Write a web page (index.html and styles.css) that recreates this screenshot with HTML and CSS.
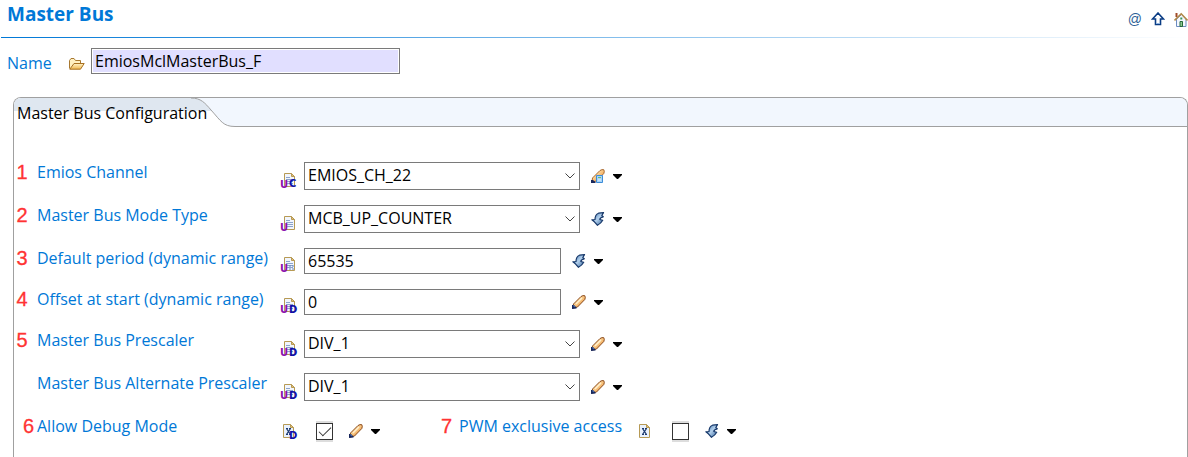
FILE: index.html
```html
<!DOCTYPE html>
<html lang="en">
<head>
  <meta charset="UTF-8">
  <meta name="viewport" content="width=device-width, initial-scale=1.0">
  <title>Master Bus</title>
  <link rel="stylesheet" href="styles.css">
</head>
<body>

  <!-- shared icons -->
  <svg class="sprite" aria-hidden="true">
    <linearGradient id="wood" x1="0" y1="0" x2="1" y2="1">
      <stop offset="0.3" stop-color="#ffe0a8"/>
      <stop offset="0.7" stop-color="#f0a858"/>
    </linearGradient>
    <linearGradient id="steel" x1="0" y1="0" x2="1" y2="1">
      <stop offset="0" stop-color="#2f68a4"/>
      <stop offset="0.5" stop-color="#b3d0ec"/>
      <stop offset="1" stop-color="#2c5e98"/>
    </linearGradient>
    <linearGradient id="gold" x1="0" y1="0" x2="0" y2="1">
      <stop offset="0" stop-color="#fff3c8"/>
      <stop offset="1" stop-color="#f0b850"/>
    </linearGradient>
    <linearGradient id="tab-fill" x1="0" y1="0" x2="0" y2="1">
      <stop offset="0.45" stop-color="#dfe7f0"/>
      <stop offset="0.45" stop-color="#ffffff"/>
    </linearGradient>
    <symbol id="page" viewBox="0 0 15 15">
      <path d="M3.500 .5h7l3 3v10h-10z" fill="#f1f5fd" stroke="#b79a54"/>
      <path d="M10.500 .5v3h3z" fill="#e4c07a" stroke="#b79a54"/>
      <path d="M5 4.500h4M5 6.500h7M5 8.500h7M5 10.500h7" stroke="#8ba3cc"/>
    </symbol>
    <symbol id="page-x" viewBox="0 0 15 15">
      <path d="M2.500 .5h7l3 3v10h-10z" fill="#e9f1fd" stroke="#b79a54"/>
      <path d="M9.500 .5v3h3z" fill="#e4c07a" stroke="#b79a54"/>
      <path d="M5 4.500h2M8 4.500h2M5 10.500h2M8 10.500h2" stroke="#1d3b70"/>
      <path d="M5.500 4.500l4 6M9.500 4.500l-4 6" stroke="#1d3b70" stroke-width="1.300"/>
    </symbol>
    <symbol id="pencil" viewBox="0 0 14 14">
      <path d="M1.500 9L9 1.500Q11 .2 12.800 .7Q13.800 2.500 12.800 4.500L5.500 12L1 13z" fill="url(#wood)" stroke="#8a4a1c"/>
      <path d="M4 9l6-6" stroke="#fff0cc" stroke-width="1.500"/>
      <path d="M0 14v-4h2l2.500 2.500v1z" fill="#18275c"/>
      <path d="M1 10.500l2 1.500" stroke="#4c78bc"/>
    </symbol>
    <symbol id="pencil-calc" viewBox="0 0 14 14">
      <path d="M1.500 9L9 1.500Q11 .2 12.800 .7Q13.800 2.500 12.800 4.500L5.500 12L1 13z" fill="url(#wood)" stroke="#a86830"/>
      <path d="M0 14v-3h2l2.500 2v1z" fill="#18275c"/>
      <path d="M5.500 6.500h6v7h-6z" fill="#a8d4f8" stroke="#3c8cd8"/>
      <path d="M7 8.500h3" stroke="#6cc26c"/>
      <path d="M7 11h3" stroke="#e4f4ff"/>
    </symbol>
    <symbol id="derive" viewBox="0 0 14 14">
      <path d="M12.500 .6L7.500 1.200Q4 2.500 4 7.500L.8 7.800Q3 9 6.500 13.300Q10 11.500 11.700 8.300L8.800 7.500Q9 5.500 12.300 4.800L10.800 3.500z" fill="url(#steel)" stroke="#17386a" stroke-width="1.200" stroke-linejoin="round"/>
    </symbol>
    <symbol id="caret" viewBox="0 0 9 5">
      <path d="M0 0h9v1L5 5H4L0 1z" fill="#000"/>
    </symbol>
    <symbol id="chevron" viewBox="0 0 10 6">
      <path d="M.5 .5L5 5L9.500 .5" fill="none" stroke="#444"/>
    </symbol>
  </svg>

  <header class="header">
    <h1>Master Bus</h1>
    <nav class="tools">
      <a href="#" class="at">@</a>
      <a href="#" aria-label="Up">
        <svg width="14" height="14" viewBox="0 0 14 14"><path d="M7 1L1.500 7H4.500v5.500h5V7h3z" fill="#fff" stroke="#0a3c84" stroke-width="1.600"/><path d="M5 11.500h4" stroke="#8fb4e0"/></svg>
      </a>
      <a href="#" aria-label="Home">
        <svg width="14" height="15" viewBox="0 0 14 15">
          <path d="M2.500 7v7.500h9.500V7L7.500 2.500z" fill="#f3f7ff" stroke="#6c8cc0"/>
          <path d="M2.500 1v4" stroke="#a04a28" stroke-width="2"/>
          <path d="M.5 8.500L7.200 1.800L13.500 8.500" fill="none" stroke="#b08848" stroke-width="1.600"/>
          <path d="M6 9.500h2.500v5H6z" fill="#8cc890" stroke="#246838"/>
          <path d="M6.300 6.500h2" stroke="#38945c" stroke-width="2"/>
        </svg>
      </a>
    </nav>
  </header>

  <div class="name-row">
    <label for="name">Name</label>
    <svg width="16" height="12" viewBox="0 0 16 12">
      <path d="M.5 10.500v-8l1.500-2h3l1.500 2h5v2.500" fill="#fff0c0" stroke="#a87830"/>
      <path d="M.8 11.200L5 5.500h10.200L11.500 11.200z" fill="url(#gold)" stroke="#a87020"/>
    </svg>
    <input type="text" id="name" value="EmiosMclMasterBus_F">
  </div>

  <main class="panel">
    <div class="tab-bar">
      <button class="tab" type="button">Master Bus Configuration</button>
      <svg class="tab-curve" width="44" height="29" viewBox="0 0 44 29">
        <path d="M0 0C10 0 14 5 20 12C30 23 32 28.500 44 28.500V29H0z" fill="url(#tab-fill)"/>
        <path d="M0 0C10 0 14 5 20 12C30 23 32 28.500 44 28.500" fill="none" stroke="#a0a0a0"/>
      </svg>
      <div class="tab-rest"></div>
    </div>

    <form class="fields">
      <div class="field">
        <span class="num">1</span>
        <label for="channel">Emios Channel</label>
        <svg class="state" viewBox="0 0 15 15"><use href="#page"/><text class="u" x="-1" y="15">U</text><text class="d" x="8" y="14">C</text></svg>
        <div class="combo">
          <select id="channel"><option>EMIOS_CH_22</option></select>
          <svg><use href="#chevron"/></svg>
        </div>
        <button class="action" type="button" aria-label="Edit"><svg class="tool"><use href="#pencil-calc"/></svg><svg class="caret"><use href="#caret"/></svg></button>
      </div>

      <div class="field">
        <span class="num">2</span>
        <label for="mode">Master Bus Mode Type</label>
        <svg class="state" viewBox="0 0 15 15"><use href="#page"/><text class="u" x="-1" y="15">U</text></svg>
        <div class="combo">
          <select id="mode"><option>MCB_UP_COUNTER</option></select>
          <svg><use href="#chevron"/></svg>
        </div>
        <button class="action" type="button" aria-label="Derive"><svg class="tool"><use href="#derive"/></svg><svg class="caret"><use href="#caret"/></svg></button>
      </div>

      <div class="field">
        <span class="num">3</span>
        <label for="period">Default period (dynamic range)</label>
        <svg class="state" viewBox="0 0 15 15"><use href="#page"/><path d="M8 9h2M11 9h2M8 12h2M11 12h2" stroke="#6484b8"/><text class="u" x="-1" y="15">U</text></svg>
        <input type="text" id="period" value="65535">
        <button class="action" type="button" aria-label="Derive"><svg class="tool"><use href="#derive"/></svg><svg class="caret"><use href="#caret"/></svg></button>
      </div>

      <div class="field">
        <span class="num">4</span>
        <label for="offset">Offset at start (dynamic range)</label>
        <svg class="state" viewBox="0 0 15 15"><use href="#page"/><text class="u" x="-1" y="15">U</text><text class="d" x="8" y="15">D</text></svg>
        <input type="text" id="offset" value="0">
        <button class="action" type="button" aria-label="Edit"><svg class="tool"><use href="#pencil"/></svg><svg class="caret"><use href="#caret"/></svg></button>
      </div>

      <div class="field">
        <span class="num">5</span>
        <label for="prescaler">Master Bus Prescaler</label>
        <svg class="state" viewBox="0 0 15 15"><use href="#page"/><text class="u" x="-1" y="15">U</text><text class="d" x="8" y="15">D</text></svg>
        <div class="combo">
          <select id="prescaler"><option>DIV_1</option></select>
          <svg><use href="#chevron"/></svg>
        </div>
        <button class="action" type="button" aria-label="Edit"><svg class="tool"><use href="#pencil"/></svg><svg class="caret"><use href="#caret"/></svg></button>
      </div>

      <div class="field">
        <span class="num"></span>
        <label for="alt-prescaler">Master Bus Alternate Prescaler</label>
        <svg class="state" viewBox="0 0 15 15"><use href="#page"/><text class="u" x="-1" y="15">U</text><text class="d" x="8" y="15">D</text></svg>
        <div class="combo">
          <select id="alt-prescaler"><option>DIV_1</option></select>
          <svg><use href="#chevron"/></svg>
        </div>
        <button class="action" type="button" aria-label="Edit"><svg class="tool"><use href="#pencil"/></svg><svg class="caret"><use href="#caret"/></svg></button>
      </div>

      <div class="checks">
        <div class="field check">
          <span class="num">6</span>
          <label for="debug">Allow Debug Mode</label>
          <svg class="state" viewBox="0 0 15 15"><use href="#page-x"/><text class="d" x="8" y="15">D</text></svg>
          <input type="checkbox" id="debug" checked>
          <button class="action" type="button" aria-label="Edit"><svg class="tool"><use href="#pencil"/></svg><svg class="caret"><use href="#caret"/></svg></button>
        </div>
        <div class="field check second">
          <span class="num">7</span>
          <label for="pwm">PWM exclusive access</label>
          <svg class="state" viewBox="0 0 15 15"><use href="#page-x"/></svg>
          <input type="checkbox" id="pwm">
          <button class="action" type="button" aria-label="Derive"><svg class="tool"><use href="#derive"/></svg><svg class="caret"><use href="#caret"/></svg></button>
        </div>
      </div>
    </form>
  </main>

</body>
</html>
```
FILE: styles.css
```css
* {
  box-sizing: border-box;
}

body {
  margin: 0;
  min-height: 100vh;
  display: flex;
  flex-direction: column;
  background-color: #fff;
  color: #000;
  font-family: "Open Sans", "Noto Sans", sans-serif;
  font-size: 16px;
  line-height: 20px;
}

input,
select,
button {
  font: inherit;
  color: inherit;
}

button {
  border: none;
  background: none;
  padding: 0;
}

svg {
  display: block;
  flex: none;
}

label {
  color: #0078d7;
  white-space: nowrap;
}

.sprite {
  position: absolute;
  width: 0;
  height: 0;
}

/* header */
.header {
  display: flex;
  justify-content: space-between;
  height: 38px;
  margin-left: 1px;
  padding: 3px 0 0 6px;
  background: linear-gradient(to right, #0078d7, #fff) bottom / 100% 1px no-repeat;
}

h1 {
  margin: 0;
  font-size: 19px;
  line-height: 22px;
  color: #0078d7;
}

.tools {
  display: flex;
  align-items: center;
  gap: 9px;
  height: 32px;
}

.at {
  color: #2d5f96;
  font-family: "Liberation Sans", sans-serif;
  font-size: 14px;
  text-decoration: none;
}

.name-row {
  display: flex;
  align-items: center;
  height: 26px;
  margin-top: 10px;
  padding-left: 7px;
}

.name-row label {
  width: 62px;
  padding-top: 4px;
}

.name-row svg {
  margin: 6px 6px 0 0;
}

input[type="text"] {
  width: 257px;
  height: 26px;
  border: 1px solid #7a7a7a;
  padding: 0 3px;
  background-color: #fff;
}

.name-row input[type="text"] {
  width: 309px;
  background-color: #e1dfff;
  box-shadow: inset 0 0 0 1px #fff;
}

/* tab panel */
.panel {
  flex: 1;
  margin: 23px 0 0 13px;
  border: 1px solid #a0a0a0;
  border-bottom: none;
  border-radius: 8px 8px 0 0;
}

.tab-bar {
  display: flex;
  height: 29px;
  border-radius: 7px 7px 0 0;
  background-color: #f2f7fe;
  overflow: hidden;
}

.tab {
  position: relative;
  z-index: 1;
  margin-right: -16px;
  padding: 0 0 0 3px;
  background: linear-gradient(#dfe7f0 45%, #fff 45%) left / calc(100% - 16px) 100% no-repeat;
}

.tab-rest {
  flex: 1;
  border-bottom: 1px solid #a0a0a0;
}

/* fields */
.fields {
  display: flex;
  flex-direction: column;
  gap: 15px;
  padding-top: 35px;
}

.field {
  display: flex;
  align-items: center;
}

.num {
  align-self: flex-start;
  width: 16px;
  margin-right: 7px;
  color: #ff3333;
  font-family: "Liberation Sans", Arial, sans-serif;
  font-size: 20px;
  -webkit-text-stroke: 0.3px #ff3333;
  text-align: center;
}

.field label {
  align-self: flex-start;
  width: 244px;
}

.state {
  align-self: flex-end;
  width: 15px;
  height: 15px;
  margin: 0 8px 2px 0;
  overflow: visible;
}

.state text {
  font-family: "DejaVu Sans", sans-serif;
  font-weight: bold;
  font-size: 10px;
}

.u {
  fill: #8a0fae;
}

.d {
  fill: #1010a8;
}

.combo {
  position: relative;
  width: 276px;
  height: 28px;
}

.combo select {
  width: 100%;
  height: 100%;
  appearance: none;
  border: 1px solid #7a7a7a;
  border-radius: 0;
  padding: 0 24px 2px 3px;
  background-color: #fff;
}

.combo svg {
  position: absolute;
  right: 5px;
  top: 11px;
  width: 10px;
  height: 6px;
  pointer-events: none;
}

.action {
  display: flex;
  align-items: center;
  gap: 8px;
  margin-left: 11px;
}

.tool {
  width: 14px;
  height: 14px;
}

.caret {
  width: 9px;
  height: 5px;
}

/* tick box row */
.checks {
  display: flex;
  gap: 52px;
}

.check {
  height: 30px;
}

.check .num {
  width: 20px;
  margin-right: 3px;
  text-align: right;
}

.check .state {
  align-self: center;
  margin: 0 20px 0 0;
}

.check .action {
  margin-left: 16px;
}

.second .num {
  margin-right: 7px;
}

.second label {
  width: 178px;
}

input[type="checkbox"] {
  appearance: none;
  width: 17px;
  height: 17px;
  margin: 0;
  border: 1px solid #333;
  box-shadow: 0 -2px #ddd, 0 2px #ddd;
}

input[type="checkbox"]:checked::after {
  content: "";
  display: block;
  width: 11px;
  height: 5px;
  margin: 3px 2px;
  border: solid #333;
  border-width: 0 0 1px 1px;
  transform: rotate(-45deg);
}
```
